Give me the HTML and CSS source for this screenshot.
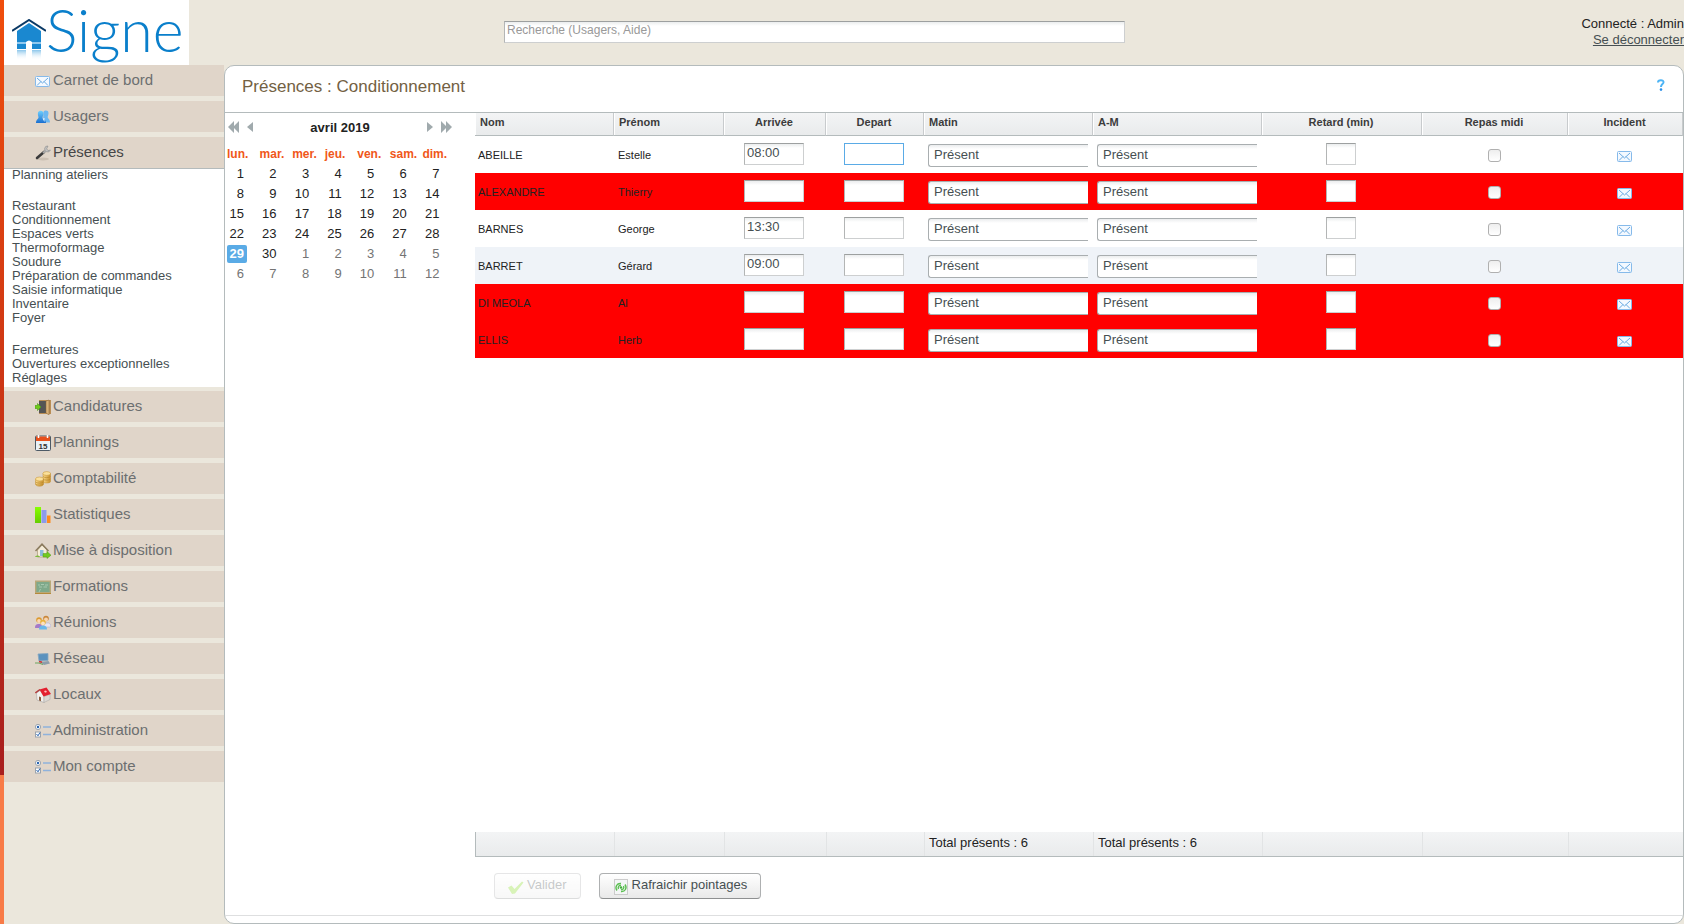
FILE: index.html
```
<!DOCTYPE html>
<html lang="fr">
<head>
    <meta charset="UTF-8">
    <meta name="viewport" content="width=device-width, initial-scale=1.0">
    <title>Signe - Présences</title>
    <link rel="stylesheet" href="styles.css">
</head>
<body>

    <!-- Icones partagées -->
    <svg class="sprite" width="0" height="0">
        <defs>
            <linearGradient id="gBlue" x2="0" y2="1"><stop offset="0" stop-color="#6fd0ff"/><stop offset="1" stop-color="#1a6fd0"/></linearGradient>
            <linearGradient id="gGreen" x2="0" y2="1"><stop offset="0" stop-color="#8f0"/><stop offset="1" stop-color="#6c0"/></linearGradient>
            <linearGradient id="gGold" x2="1" y2="0"><stop offset="0" stop-color="#f9d98a"/><stop offset="1" stop-color="#c88f2c"/></linearGradient>
            <linearGradient id="gFade" x2="0" y2="1"><stop offset="0" stop-color="#6fb8e6" stop-opacity=".8"/><stop offset="1" stop-color="#fff" stop-opacity="0"/></linearGradient>
        </defs>
        <symbol id="mail" viewBox="0 0 16 16">
            <rect x=".5" y="3.500" width="14" height="10" rx="1" fill="#f4f9ff" stroke="#86baea"/>
            <path d="M2 5l5.500 5L13 5M2 12.500l4-4M13 12.500l-4-4" fill="none" stroke="#6aaae2"/>
        </symbol>
        <symbol id="users" viewBox="0 0 16 16">
            <path d="M8.500 3c1-2 5-2 5 1 0 2-.8 3-.8 4 .3 2 2.300 2 2.300 5.500H8z" fill="#6cb8f2"/>
            <path d="M3 3.500c1-2.500 5.500-2.500 5.500 1 0 2-1 3-1 4 .5 1.500 3.500 2 3.500 5.500H1c0-3.500 2.500-4 2.500-5.500 0-1-1-3-.5-5z" fill="url(#gBlue)"/>
            <path d="M7.500 9.500l2-.5 0 4z" fill="#e8f4ff"/>
        </symbol>
        <symbol id="wrench" viewBox="0 0 16 16">
            <ellipse cx="8" cy="14" rx="6" ry="1.500" fill="#cbbfb2"/>
            <path d="M2 13L9 7" stroke="#3b3b3b" stroke-width="2.600" stroke-linecap="round"/>
            <path d="M8 8l3.500-3" stroke="#aaa" stroke-width="2"/>
            <path d="M13 1a3 3 0 1 0 2.400 4l-2.400.6-1.300-1.800z" fill="#c2c2c2" stroke="#8a8a8a" stroke-width=".6"/>
        </symbol>
        <symbol id="door" viewBox="0 0 16 16">
            <path d="M4 1h12v14H4z" fill="#b98d55"/><path d="M4 2h7v12H4z" fill="#555"/>
            <path d="M11 2l3-1v15l-3-2z" fill="#d9b27a" stroke="#8a6230" stroke-width=".5"/>
            <path d="M0 6.500h2.500V4.500L6 8l-3.500 3.500v-2H0z" fill="#6fca1c" stroke="#4b9a10" stroke-width=".6"/>
        </symbol>
        <symbol id="calendar" viewBox="0 0 16 16">
            <rect x=".5" y="1" width="15" height="14.500" rx="1" fill="#e9f1f7" stroke="#4d5a66"/>
            <path d="M1 1.500h14V6H1z" fill="#e8501c"/><path d="M3.500 0v3M12.500 0v3" stroke="#fff" stroke-width="1.500"/>
            <text x="8" y="13.500" text-anchor="middle" font-size="8" font-weight="bold" fill="#333">15</text>
        </symbol>
        <symbol id="coins" viewBox="0 0 16 16">
            <g fill="url(#gGold)" stroke="#c08f30" stroke-width=".5">
                <path d="M8 2.500v8c0 2 7.500 2 7.500 0v-8z"/><ellipse cx="11.700" cy="2.500" rx="3.800" ry="1.900" fill="#fbe09a"/>
                <path d="M.5 8v5c0 3 8 3 8 0V8z"/><ellipse cx="4.500" cy="8" rx="4" ry="2" fill="#fbe09a"/>
            </g>
            <path d="M8 5.500c1 1.500 6.500 1.500 7.500 0M8 8c1 1.500 6.500 1.500 7.500 0M.5 11c1 1.500 7 1.500 8 0M.5 13c1 1.500 7 1.500 8 0" fill="none" stroke="#b58428" stroke-width=".6"/>
        </symbol>
        <symbol id="stats" viewBox="0 0 16 16">
            <path d="M0 0h6v16H0z" fill="url(#gGreen)"/><path d="M6.500 3h5v13h-5z" fill="#8d9bea"/><path d="M12 8.500h3.500V16H12z" fill="#ff8a1c"/>
        </symbol>
        <symbol id="homego" viewBox="0 0 16 16">
            <path d="M2.500 7L7 2l5 5v7H2.500z" fill="#f5ecd8" stroke="#a18e6a" stroke-width=".6"/>
            <path d="M.5 8L7 1.200 13.500 8" fill="none" stroke="#8b7b5e" stroke-width="1.500"/>
            <path d="M5 7h3.500v6H5z" fill="#8cbcdc"/><path d="M0 14c1-2 4-2 5 0z" fill="#7dba3c"/>
            <path d="M8 10.500h4V8.500l4 3.700-4 3.300V14H8z" fill="#72c91f" stroke="#4f9d12" stroke-width=".5"/>
        </symbol>
        <symbol id="board" viewBox="0 0 16 16">
            <rect x=".7" y="2.200" width="14.600" height="11.500" fill="#7fa98a" stroke="#b8a878" stroke-width="1.400"/>
            <path d="M3 6h2M6 5.500h3M10 6h3M4 8h3M8.500 8H12M4 13l1.500-3" stroke="#b4d0b8" stroke-width=".8"/><path d="M0 14.500h16" stroke="#b58a3a"/>
        </symbol>
        <symbol id="group" viewBox="0 0 16 16">
            <circle cx="11" cy="3.500" r="2.800" fill="#c9873c"/><circle cx="11" cy="4.500" r="2" fill="#f8d4ad"/>
            <path d="M9 8h5c2 1 2 4 1.500 4H9z" fill="#e8e6f2" stroke="#aaa6c8" stroke-width=".5"/>
            <circle cx="4" cy="5" r="2.800" fill="#dc9a30"/><circle cx="4" cy="6" r="1.900" fill="#fbd9b5"/>
            <path d="M0 13c0-3 1-4 4-4s3 2 3 4z" fill="#a67ac8"/>
            <circle cx="8" cy="7.500" r="2.700" fill="#e7b33c"/><circle cx="8" cy="8.500" r="1.900" fill="#fde0c0"/>
            <path d="M4 14.500c0-3 1.500-4 4-4s4 1 4 4z" fill="#69b7ea"/>
        </symbol>
        <symbol id="network" viewBox="0 0 16 16">
            <path d="M3 3l10-.5v7L4 10z" fill="#5b92be" stroke="#86a7c0" stroke-width=".8"/>
            <path d="M5 11l8.500-1 1.500 2.500-6 1.500z" fill="#8d9dab"/><path d="M0 12h4l4 1.500" fill="none" stroke="#6ea562" stroke-width="1.200"/>
            <path d="M4 10.500l3 .8" stroke="#c33" stroke-width="1.500"/>
        </symbol>
        <symbol id="house" viewBox="0 0 16 16">
            <path d="M1.500 6L5 3.500l4 5.500v6.500L2 13z" fill="#f3f1ee" stroke="#999" stroke-width=".5"/>
            <path d="M9 9.500l6-2v5L9 15.500z" fill="#dcd8d3" stroke="#999" stroke-width=".4"/>
            <path d="M.3 6L5 2.500" stroke="#b23c3c" stroke-width="1.500"/>
            <path d="M4.500 2.500L11.500.5 16 7 8.500 9.500z" fill="#e3202f"/><path d="M9 4l2-.5 1 1.500-2 .7z" fill="#fbb"/>
            <path d="M4 9.500l2 .7v4L4 13.500z" fill="#8b5a3a"/>
        </symbol>
        <symbol id="options" viewBox="0 0 16 16">
            <circle cx="3" cy="4" r="2.600" fill="#fff" stroke="#9aa3ad"/><circle cx="3" cy="4" r="1.200" fill="#2662b0"/>
            <rect x=".5" y="9" width="5" height="5" fill="#fff" stroke="#9aa3ad"/><path d="M1.500 11l1.500 1.800L5 9.500" fill="none" stroke="#2662b0"/>
            <path d="M8 4h8M8 11.500h8" stroke="#8fb2dc" stroke-width="1.500"/>
        </symbol>
    </svg>

    <header class="topbar">
        <a class="logo" href="#">
            <svg class="logo-house" width="34" height="42" viewBox="0 0 34 42">
                <path d="M5 12L17 4l12 8v18H5z" fill="#1a88d0"/>
                <path d="M5 24h24" stroke="#8fc8ee" stroke-width="2"/>
                <path d="M14 23q3-3 6 0v8h-6z" fill="#fff"/>
                <path d="M0 12L17 1l17 11" fill="none" stroke="#0b3a66" stroke-width="2"/>
                <path d="M5 31h9v10H5zM20 31h9v10h-9z" fill="url(#gFade)"/>
            </svg>
            <span class="logo-name">Signe</span>
        </a>
        <input class="search" type="text" placeholder="Recherche (Usagers, Aide)" aria-label="Recherche">
        <div class="account">
            <div>Connecté : Admin</div>
            <a href="#">Se déconnecter</a>
        </div>
    </header>

    <div class="layout">
        <nav class="menu">
            <a class="menu-item" href="#"><svg><use href="#mail"/></svg>Carnet de bord</a>
            <a class="menu-item" href="#"><svg><use href="#users"/></svg>Usagers</a>
            <a class="menu-item open" href="#"><svg><use href="#wrench"/></svg>Présences</a>
            <div class="submenu">
                <ul>
                    <li><a href="#">Planning ateliers</a></li>
                </ul>
                <ul>
                    <li><a href="#">Restaurant</a></li>
                    <li><a href="#">Conditionnement</a></li>
                    <li><a href="#">Espaces verts</a></li>
                    <li><a href="#">Thermoformage</a></li>
                    <li><a href="#">Soudure</a></li>
                    <li><a href="#">Préparation de commandes</a></li>
                    <li><a href="#">Saisie informatique</a></li>
                    <li><a href="#">Inventaire</a></li>
                    <li><a href="#">Foyer</a></li>
                </ul>
                <ul>
                    <li><a href="#">Fermetures</a></li>
                    <li><a href="#">Ouvertures exceptionnelles</a></li>
                    <li><a href="#">Réglages</a></li>
                </ul>
            </div>
            <a class="menu-item" href="#"><svg><use href="#door"/></svg>Candidatures</a>
            <a class="menu-item" href="#"><svg><use href="#calendar"/></svg>Plannings</a>
            <a class="menu-item" href="#"><svg><use href="#coins"/></svg>Comptabilité</a>
            <a class="menu-item" href="#"><svg><use href="#stats"/></svg>Statistiques</a>
            <a class="menu-item" href="#"><svg><use href="#homego"/></svg>Mise à disposition</a>
            <a class="menu-item" href="#"><svg><use href="#board"/></svg>Formations</a>
            <a class="menu-item" href="#"><svg><use href="#group"/></svg>Réunions</a>
            <a class="menu-item" href="#"><svg><use href="#network"/></svg>Réseau</a>
            <a class="menu-item" href="#"><svg><use href="#house"/></svg>Locaux</a>
            <a class="menu-item" href="#"><svg><use href="#options"/></svg>Administration</a>
            <a class="menu-item" href="#"><svg><use href="#options"/></svg>Mon compte</a>
        </nav>

        <main class="panel">
            <div class="panel-head">
                <h1>Présences : Conditionnement</h1>
                <a class="help" href="#" aria-label="Aide">
                    <svg width="8" height="12" viewBox="0 0 8 12">
                        <path d="M1 3.500C1 .5 7 .5 6.500 3.500 6.300 5.200 4 5.200 4 8" fill="none" stroke="#4db4f5" stroke-width="2"/>
                        <circle cx="4" cy="10.600" r="1.300" fill="#2a8ee8"/>
                    </svg>
                </a>
            </div>

            <div class="panel-body">
                <section class="calendar">
                    <div class="cal-nav">
                        <button aria-label="Année précédente"><svg width="11" height="12"><path d="M6 0v12L0 6zM11 0v12L5 6z"/></svg></button>
                        <button aria-label="Mois précédent"><svg width="6" height="12"><path d="M6 1v10L0 6z"/></svg></button>
                        <span class="cal-title">avril 2019</span>
                        <button aria-label="Mois suivant"><svg width="6" height="12"><path d="M0 1v10l6-5z"/></svg></button>
                        <button aria-label="Année suivante"><svg width="11" height="12"><path d="M0 0v12l6-6zM5 0v12l6-6z"/></svg></button>
                    </div>
                    <table class="cal-days">
                        <thead>
                            <tr><th>lun.</th><th>mar.</th><th>mer.</th><th>jeu.</th><th>ven.</th><th>sam.</th><th>dim.</th></tr>
                        </thead>
                        <tbody id="days"></tbody>
                    </table>
                </section>

                <section class="presence">
                    <table class="grid">
                        <colgroup>
                            <col class="c-nom"><col class="c-prenom"><col class="c-arrivee"><col class="c-depart"><col class="c-demi"><col class="c-demi"><col class="c-retard"><col class="c-repas"><col class="c-incident">
                        </colgroup>
                        <thead>
                            <tr>
                                <th>Nom</th>
                                <th>Prénom</th>
                                <th class="center">Arrivée</th>
                                <th class="center">Depart</th>
                                <th>Matin</th>
                                <th>A-M</th>
                                <th class="center">Retard (min)</th>
                                <th class="center">Repas midi</th>
                                <th class="center">Incident</th>
                            </tr>
                        </thead>
                        <tbody id="rows"></tbody>
                    </table>

                    <table class="totals">
                        <colgroup>
                            <col class="c-nom"><col class="c-prenom"><col class="c-arrivee"><col class="c-depart"><col class="c-demi"><col class="c-demi"><col class="c-retard"><col class="c-repas"><col class="c-incident">
                        </colgroup>
                        <tbody>
                            <tr><td></td><td></td><td></td><td></td><td>Total présents : 6</td><td>Total présents : 6</td><td></td><td></td><td></td></tr>
                        </tbody>
                    </table>

                    <div class="actions">
                        <button class="btn" disabled>
                            <svg width="16" height="16" viewBox="0 0 16 16"><path d="M0 8.500l3.500-2L6.500 10 14 2.500l1.500 1L7 14.500 4 15z" fill="#7fd818"/></svg>
                            Valider
                        </button>
                        <button class="btn">
                            <svg width="16" height="16" viewBox="0 0 16 16">
                                <rect x="1.500" y=".5" width="13" height="15" fill="#f4f6f6" stroke="#ccc"/>
                                <path d="M4 11.500C1.500 8 4 4 8 4.500M12 5.500c2.500 3.500 0 7.500-4 7M5.500 10c-1-2 .5-4 2.500-3.500M10.500 7c1 2-.5 4-2.500 3.500" fill="none" stroke="#5cbf52" stroke-width="1.400"/>
                                <circle cx="8" cy="8.500" r="1.200" fill="#3fae3a"/>
                            </svg>
                            Rafraichir pointages
                        </button>
                    </div>
                </section>
            </div>

            <div class="panel-foot"></div>
        </main>
    </div>

    <script>
        const people = [
            { nom: "ABEILLE", prenom: "Estelle", arrivee: "08:00" },
            { nom: "ALEXANDRE", prenom: "Thierry", arrivee: "" },
            { nom: "BARNES", prenom: "George", arrivee: "13:30" },
            { nom: "BARRET", prenom: "Gérard", arrivee: "09:00" },
            { nom: "DI MEOLA", prenom: "Al", arrivee: "" },
            { nom: "ELLIS", prenom: "Herb", arrivee: "" },
        ];

        const rows = document.getElementById("rows");
        people.forEach((p, index) => {
            const tr = document.createElement("tr");
            // pas d'arrivée pointée = ligne en rouge
            if (!p.arrivee) tr.className = "absent";
            tr.innerHTML = `
                <td>${p.nom}</td>
                <td>${p.prenom}</td>
                <td class="center"><input class="field" type="text" value="${p.arrivee}" aria-label="Arrivée ${p.nom}"></td>
                <td class="center"><input class="field${index === 0 ? " active" : ""}" type="text" aria-label="Depart ${p.nom}"></td>
                <td><select aria-label="Matin ${p.nom}"><option>Présent</option><option>Absent</option></select></td>
                <td><select aria-label="A-M ${p.nom}"><option>Présent</option><option>Absent</option></select></td>
                <td class="center"><input class="field short" type="text" aria-label="Retard ${p.nom}"></td>
                <td class="center"><input class="tick" type="checkbox" aria-label="Repas midi ${p.nom}"></td>
                <td class="center"><button class="incident" aria-label="Incident ${p.nom}"><svg width="16" height="16"><use href="#mail"/></svg></button></td>`;
            rows.appendChild(tr);
        });

        const days = document.getElementById("days");
        for (let week = 0; week < 6; week++) {
            const tr = document.createElement("tr");
            for (let d = 1; d <= 7; d++) {
                const n = week * 7 + d;
                const cls = n > 30 ? "other" : n === 29 ? "today" : "";
                tr.innerHTML += `<td><span class="${cls}">${n > 30 ? n - 30 : n}</span></td>`;
            }
            days.appendChild(tr);
        }
    </script>
</body>
</html>
```

FILE: styles.css
```
* {
    margin: 0;
    padding: 0;
    box-sizing: border-box;
}

body {
    display: flex;
    flex-direction: column;
    min-height: 100vh;
    padding-left: 4px;
    font-family: "Liberation Sans", Arial, sans-serif;
    font-size: 13px;
    color: #222;
    background:
        linear-gradient(#f04e0c, #a81e1e) 0 0 / 4px 775px no-repeat,
        linear-gradient(#f87b47, #f87b47) 0 0 / 4px 100% no-repeat,
        #ebe7dc;
}

button, input, select {
    font-family: inherit;
    font-size: 13px;
    color: #464f52;
}

.sprite {
    position: absolute;
}

/* Bandeau du haut */
.topbar {
    display: grid;
    grid-template-columns: 500fr 621fr 559fr;
    align-items: start;
    height: 65px;
}

.logo {
    display: flex;
    width: 185px;
    height: 65px;
    padding-left: 8px;
    background: #fff;
    text-decoration: none;
}

.logo-house {
    flex: none;
    margin-top: 19px;
}

.logo-name {
    font-family: Lato, "Liberation Sans", sans-serif;
    font-size: 59px;
    font-weight: 300;
    line-height: 60px;
    color: #0a7fcb;
}

.search {
    height: 22px;
    margin-top: 21px;
    padding: 0 2px 4px;
    border: 1px solid #cdcfd0;
    border-top-color: #9da0a0;
    border-left-color: #b3b5b5;
    background: linear-gradient(#ebedee, #fff 4px);
    font-size: 12px;
}

.search::placeholder {
    color: #999;
}

.account {
    padding-top: 16px;
    line-height: 16px;
    text-align: right;
}

.account a {
    color: #464f52;
}

.layout {
    display: flex;
    flex: 1;
}

/* Menu de gauche */
.menu {
    flex: none;
    width: 220px;
}

.menu-item {
    display: flex;
    align-items: center;
    gap: 2px;
    height: 31px;
    margin-bottom: 5px;
    padding: 0 0 2px 31px;
    background: #e0d5c9;
    color: #6c6f70;
    font-size: 15px;
    text-decoration: none;
}

.menu-item svg {
    width: 16px;
    height: 16px;
    margin-top: 2px;
}

.menu-item.open {
    height: 32px;
    margin-bottom: 0;
    border-bottom: 1px solid #b4bbbc;
    color: #464646;
}

.submenu {
    margin-bottom: 4px;
    padding-bottom: 2px;
    background: #fff;
    line-height: 14px;
}

.submenu ul {
    padding-left: 8px;
    list-style: none;
}

.submenu ul:first-child {
    line-height: 12px;
}

.submenu ul + ul {
    padding-top: 18px;
}

.submenu a {
    color: #464f52;
    text-decoration: none;
}

/* Panneau principal */
.panel {
    display: flex;
    flex: 1;
    flex-direction: column;
    min-width: 0;
    border: 1px solid #b4bbbc;
    border-radius: 10px;
    background: #fff;
    overflow: hidden;
}

.panel-head {
    display: flex;
    justify-content: space-between;
    height: 47px;
    padding: 10px 18px 0 17px;
    border-bottom: 1px solid #b4bbbc;
}

.panel-head h1 {
    color: #736143;
    font-size: 17px;
    font-weight: normal;
    line-height: 22px;
}

.help {
    margin-top: 3px;
}

.panel-body {
    display: flex;
    flex: 1;
}

.panel-foot {
    height: 8px;
    border-top: 1px solid #dedfe0;
}

/* Calendrier */
.calendar {
    flex: none;
    width: 250px;
    padding-left: 2px;
}

.cal-nav {
    display: flex;
    align-items: center;
    gap: 8px;
    width: 225px;
    height: 28px;
    margin-bottom: 2px;
    padding-left: 1px;
}

.cal-nav button {
    display: flex;
    border: none;
    background: none;
}

.cal-nav path {
    fill: #a0aaad;
}

.cal-title {
    flex: 1;
    font-weight: bold;
    text-align: center;
}

.cal-days {
    width: 228px;
    table-layout: fixed;
    border-collapse: collapse;
}

.cal-days th {
    height: 21px;
    color: #f0571a;
    font-size: 12px;
    text-align: left;
    white-space: nowrap;
}

.cal-days td {
    height: 20px;
}

.cal-days span {
    display: block;
    width: 20px;
    padding-right: 3px;
    border-radius: 2px;
    line-height: 18px;
    text-align: right;
}

.cal-days .other {
    color: #747474;
}

.cal-days .today {
    background: #5aabe6;
    color: #fff;
    font-weight: bold;
}

/* Tableau des présences */
.presence {
    display: flex;
    flex: 1;
    flex-direction: column;
    min-width: 0;
}

.grid, .totals {
    width: 100%;
    table-layout: fixed;
    border-collapse: separate;
    border-spacing: 0;
}

.c-nom { width: 139px; }
.c-prenom { width: 110px; }
.c-arrivee { width: 102px; }
.c-depart { width: 98px; }
.c-demi { width: 169px; }
.c-retard { width: 160px; }
.c-repas { width: 146px; }
.c-incident { width: 115px; }

.grid th {
    height: 23px;
    padding: 0 5px 4px;
    border-right: 1px solid #c8cbcd;
    border-bottom: 1px solid #b4bbbc;
    box-shadow: inset 1px 0 #fff;
    background: linear-gradient(#f3f4f5, #e9ebec);
    color: #3c3c3c;
    font-size: 11px;
    text-align: left;
}

.grid td {
    height: 37px;
    padding: 0 5px 0 4px;
    font-size: 11px;
    vertical-align: middle;
}

.grid td:first-child {
    padding-left: 3px;
}

.grid .center {
    padding-right: 6px;
    text-align: center;
}

.grid tr:nth-child(4) td {
    background: #eff3f8;
}

.grid .absent td {
    background: #f00;
}

.field {
    display: block;
    width: 60px;
    height: 22px;
    margin: 0 auto 2px;
    padding: 0 2px 3px;
    border: 1px solid #cdcfd0;
    border-top-color: #9da0a0;
    border-left-color: #b3b5b5;
    background: linear-gradient(#ebedee, #fff 4px);
}

.field.active {
    border-color: #5aabe6;
    background: #fff;
}

.field.short {
    width: 30px;
}

.grid select {
    display: block;
    width: 100%;
    height: 23px;
    margin-top: 1px;
    padding: 0 0 2px 5px;
    border: 1px solid #a9aeb0;
    border-right: none;
    border-radius: 3px 0 0 3px;
    background: linear-gradient(#ebedee, #fff 4px);
    appearance: none;
}

.tick {
    display: block;
    width: 13px;
    height: 13px;
    margin: 2px auto 0;
    border: 1px solid #b0b0b0;
    border-radius: 3px;
    background: linear-gradient(#eee, #fff);
    appearance: none;
}

.incident {
    display: block;
    height: 16px;
    margin: 2px auto 0;
    border: none;
    background: none;
}

.totals {
    margin-top: auto;
    border-left: 1px solid #b4bbbc;
    border-bottom: 1px solid #b4bbbc;
    background: linear-gradient(#f3f4f5, #e9ebec);
}

.totals td {
    height: 24px;
    padding: 0 4px 3px;
    border-right: 1px solid #e2e4e5;
}

.totals td:last-child {
    border-right: none;
}

.actions {
    display: flex;
    gap: 18px;
    padding: 16px 19px;
}

.btn {
    display: flex;
    align-items: center;
    gap: 3px;
    height: 26px;
    padding: 0 13px 3px;
    border: 1px solid #aeb0b1;
    border-bottom-color: #8e9091;
    border-radius: 4px;
    background: linear-gradient(#fff, #e9e9e9);
}

.btn svg {
    margin-top: 4px;
}

.btn:disabled {
    opacity: .3;
}
```
